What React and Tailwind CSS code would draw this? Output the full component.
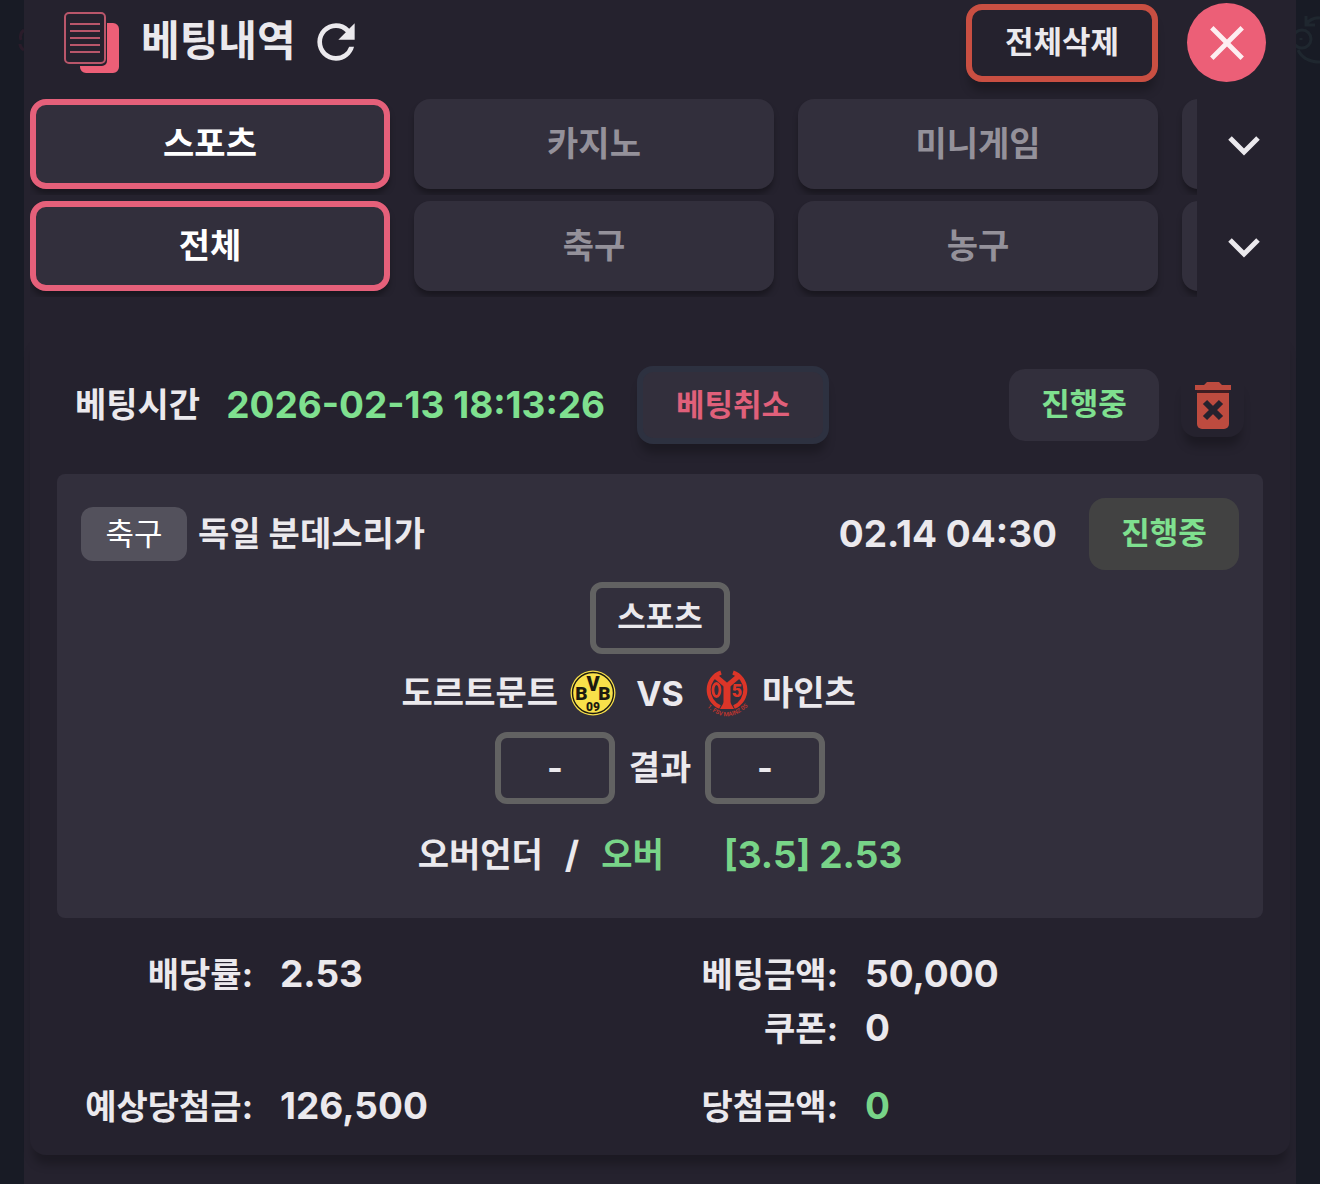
import { useState } from "react";
import { MdClose, MdRefresh } from "react-icons/md";

const categories = ["스포츠", "카지노", "미니게임", ""];
const sports = ["전체", "축구", "농구", ""];

const bet = {
  time: "2026-02-13 18:13:26",
  status: "진행중",
  match: {
    sport: "축구",
    league: "독일 분데스리가",
    startsAt: "02.14 04:30",
    status: "진행중",
    type: "스포츠",
    home: "도르트문트",
    away: "마인츠",
    market: "오버언더",
    pick: "오버",
    odds: "[3.5] 2.53",
  },
};

function HistoryIcon() {
  return (
    <svg viewBox="0 0 56 62" className="h-[62px] w-14 shrink-0" aria-hidden="true">
      <path
        d="M43 11h6a6 6 0 0 1 6 6v38a6 6 0 0 1-6 6H22a6 6 0 0 1-6-6v-1h22a5 5 0 0 0 5-5z"
        fill="#ec5f77"
      />
      <rect x="1" y="1" width="40" height="50" rx="4" fill="#25222e" stroke="#b9566a" strokeWidth="2" />
      <path d="M6 12h30M6 19h30M6 26h30M6 33h30M6 40h30" stroke="#b9566a" strokeWidth="2" />
    </svg>
  );
}

function ChevronIcon() {
  return (
    <svg viewBox="0 0 32 20" className="h-5 w-8" aria-hidden="true">
      <path d="M2 2l14 14L30 2" fill="none" stroke="currentColor" strokeWidth="5" />
    </svg>
  );
}

function TrashIcon() {
  return (
    <svg viewBox="0 0 36 47" className="h-[47px] w-9" aria-hidden="true">
      <path d="M0 3h9l3-3h12l3 3h9v5H0z" fill="#bd4b3f" />
      <path d="M2 8h32v3H2z" fill="#3f1d22" />
      <path d="M2 11h32v31a5 5 0 0 1-5 5H7a5 5 0 0 1-5-5z" fill="#bd4b3f" />
      <path d="M10 20l16 16M26 20L10 36" stroke="#25222e" strokeWidth="6" />
    </svg>
  );
}

function DortmundLogo() {
  return (
    <svg viewBox="0 0 46 46" className="size-[46px]" role="img" aria-label="도르트문트">
      <circle cx="23" cy="23" r="22.5" fill="#f8e04a" />
      <circle cx="23" cy="23" r="20.5" fill="none" stroke="#1c1a10" strokeWidth="1.4" />
      <g fill="#1c1a10" fontFamily="Roboto, Liberation Sans, sans-serif" fontWeight="900" textAnchor="middle">
        <text x="11.5" y="30" fontSize="19">B</text>
        <text x="23" y="21" fontSize="20">V</text>
        <text x="34.5" y="30" fontSize="19">B</text>
        <text x="23" y="41" fontSize="12">09</text>
      </g>
    </svg>
  );
}

function MainzLogo() {
  return (
    <svg viewBox="0 0 46 46" className="size-[46px] overflow-visible" role="img" aria-label="마인츠">
      <g fill="none" stroke="#dc3528">
        <path d="M17 2.5A18.5 18.5 0 0 0 16 37M29 2.5A18.5 18.5 0 0 1 30 37" strokeWidth="4" />
        <path d="M10 5l13 11L36 5" strokeWidth="5" />
        <path d="M23 14v22" strokeWidth="7" />
        <ellipse cx="12.5" cy="20" rx="3.5" ry="6.5" strokeWidth="2.8" />
      </g>
      <path d="M20 32h6l4 7H16z" fill="#dc3528" />
      <text
        x="33"
        y="27"
        fontSize="18"
        fontWeight="900"
        fontFamily="Roboto, Liberation Sans, sans-serif"
        textAnchor="middle"
        fill="#dc3528"
      >
        5
      </text>
      <path id="mainz-arc" d="M0 34Q23 59 47 33" fill="none" />
      <text fontSize="6" fontWeight="700" fontFamily="Roboto, Liberation Sans, sans-serif" fill="#b8352f">
        <textPath href="#mainz-arc" startOffset="50%" textAnchor="middle">
          1. FSV MAINZ 05
        </textPath>
      </text>
    </svg>
  );
}

function FilterRow({ items, label }) {
  const [active, setActive] = useState(items[0]);

  return (
    <div className="flex items-start">
      <div className="flex min-w-0 flex-1 gap-6 overflow-hidden pb-1.5" role="group" aria-label={label}>
        {items.map((item) => (
          <button
            key={item}
            type="button"
            aria-label={item || "다음"}
            aria-pressed={item === active}
            onClick={() => setActive(item)}
            className={
              "h-[90px] w-[360px] shrink-0 rounded-2xl bg-[#322f3c] pb-0.5 text-[34px] shadow-[0_6px_6px_-1px_rgba(0,0,0,0.35)] " +
              (item === active
                ? "border-[6px] border-[#e5607a] text-white"
                : "text-[#94919a]")
            }
          >
            {item}
          </button>
        ))}
      </div>
      <button
        type="button"
        aria-label={label + " 더보기"}
        className="flex h-[90px] w-[93px] items-center justify-center pt-1 text-[#ebe9ed]"
      >
        <ChevronIcon />
      </button>
    </div>
  );
}

function Status({ children, className }) {
  return (
    <span
      className={
        "flex h-[72px] w-[150px] items-center justify-center rounded-2xl pb-0.5 text-[31px] text-[#7fe08f] " +
        className
      }
    >
      {children}
    </span>
  );
}

function Outlined({ children, className }) {
  return (
    <span
      className={
        "flex h-[72px] items-center justify-center rounded-xl border-[6px] border-[#626262] pb-0.5 " + className
      }
    >
      {children}
    </span>
  );
}

function Stat({ label, value, labelWidth, green }) {
  return (
    <div className="flex h-[54px] items-center gap-[27px]">
      <dt className={"shrink-0 text-right text-[34px] " + labelWidth}>{label}:</dt>
      <dd className={"text-[37px] " + (green ? "text-[#78d488]" : "")}>{value}</dd>
    </div>
  );
}

function MatchCard({ match }) {
  return (
    <article className="mx-[27px] mt-[30px] rounded-lg bg-[#322f3c] px-6 pt-6 pb-9">
      <header className="flex items-center">
        <span className="flex h-[54px] w-[106px] items-center justify-center rounded-xl bg-[#53515c] text-[31px] font-normal text-white">
          {match.sport}
        </span>
        <h2 className="ml-[11px] pb-0.5 text-[34px]">{match.league}</h2>
        <time className="mr-8 ml-auto text-[37px]">{match.startsAt}</time>
        <Status className="bg-[#424242]">{match.status}</Status>
      </header>

      <div className="mt-3 flex justify-center">
        <Outlined className="w-[140px] text-[31px]">{match.type}</Outlined>
      </div>

      <div className="mt-[9px] grid h-[60px] grid-cols-[1fr_88px_1fr] items-center text-[34px]">
        <div className="flex items-center justify-end gap-3">
          <span className="pb-0.5">{match.home}</span>
          <DortmundLogo />
        </div>
        <span className="text-center">VS</span>
        <div className="flex items-center gap-3">
          <MainzLogo />
          <span className="pb-0.5">{match.away}</span>
        </div>
      </div>

      <div className="mt-[9px] flex items-center justify-center text-[34px]">
        <Outlined className="w-[120px]">-</Outlined>
        <span className="w-[90px] pb-0.5 text-center">결과</span>
        <Outlined className="w-[120px]">-</Outlined>
      </div>

      <div className="mt-6 flex h-[54px] items-center justify-center text-[34px]">
        <span className="pb-0.5">{match.market}</span>
        <span className="mx-[22px] text-[37px]">/</span>
        <span className="pb-0.5 text-[#78d488]">{match.pick}</span>
        <span className="ml-[60px] text-[37px] text-[#78d488]">{match.odds}</span>
      </div>
    </article>
  );
}

function App() {
  return (
    <div className="relative min-h-screen overflow-hidden bg-[#181b25] px-6 font-['Inter','Noto_Sans_CJK_KR',sans-serif] font-bold text-[#ebe9ed]">
      <svg viewBox="0 0 24 70" className="absolute top-3 right-0 h-[70px] w-6" aria-hidden="true">
        <g fill="none" stroke="#1f272f" strokeWidth="3">
          <circle cx="6" cy="27" r="9" />
          <path d="M5 26v2M2 38q6 12 22 12M10 12q6-7 14-6M10 4v9h9" />
        </g>
      </svg>
      <svg viewBox="0 0 8 24" className="absolute top-7 left-4 h-6 w-2" aria-hidden="true">
        <path d="M8 2q-5 4-3 10M4 16q0 4 4 6" fill="none" stroke="#2a1c2a" strokeWidth="3" />
      </svg>

      <div className="relative min-h-screen bg-[#25222e] px-1.5 pt-[3px] pb-7">
        <header className="flex h-[79px] items-center pr-6 pl-[34px]">
          <HistoryIcon />
          <h1 className="ml-[21px] pb-1 text-[42px]">베팅내역</h1>
          <button type="button" aria-label="새로고침" className="ml-3 pb-0.5">
            <MdRefresh size={56} />
          </button>
          <button
            type="button"
            className="ml-auto h-[78px] w-48 rounded-2xl border-[6px] border-[#c94f42] text-[31px] shadow-[0_12px_10px_-3px_rgba(0,0,0,0.25)]"
          >
            전체삭제
          </button>
          <button
            type="button"
            aria-label="닫기"
            className="ml-[29px] flex size-[79px] items-center justify-center rounded-full bg-[#ec5f77] text-[#fdeef1]"
          >
            <MdClose size={58} />
          </button>
        </header>

        <nav className="mt-[17px] flex flex-col gap-1.5">
          <FilterRow items={categories} label="게임 종류" />
          <FilterRow items={sports} label="종목" />
        </nav>

        <section className="mt-[33px] rounded-2xl pt-9 pb-[22px] shadow-[0_12px_10px_-3px_rgba(0,0,0,0.25)]">
          <div className="flex items-center pr-[46px] pl-[45px]">
            <span className="pb-0.5 text-[34px]">베팅시간</span>
            <time className="ml-[26px] text-[37px] text-[#7fe08f]">{bet.time}</time>
            <button
              type="button"
              className="ml-8 h-[78px] w-48 rounded-2xl border-[6px] border-[#2d3140] bg-[#322f3c] text-[31px] text-[#e0607a] shadow-[0_12px_10px_-3px_rgba(0,0,0,0.25)]"
            >
              베팅취소
            </button>
            <Status className="ml-auto bg-[#322f3c]">{bet.status}</Status>
            <button
              type="button"
              aria-label="삭제"
              className="ml-[22px] flex size-[63px] items-center justify-center rounded-2xl shadow-[0_12px_10px_-3px_rgba(0,0,0,0.25)]"
            >
              <TrashIcon />
            </button>
          </div>

          <MatchCard match={bet.match} />

          <dl className="mx-[27px] mt-[29px] grid grid-cols-2">
            <div>
              <Stat label="배당률" value="2.53" labelWidth="w-[196px]" />
            </div>
            <div>
              <Stat label="베팅금액" value="50,000" labelWidth="w-[178px]" />
              <Stat label="쿠폰" value="0" labelWidth="w-[178px]" />
            </div>
            <div className="mt-6">
              <Stat label="예상당첨금" value="126,500" labelWidth="w-[196px]" />
            </div>
            <div className="mt-6">
              <Stat label="당첨금액" value="0" labelWidth="w-[178px]" green />
            </div>
          </dl>
        </section>
      </div>
    </div>
  );
}

export default App;
